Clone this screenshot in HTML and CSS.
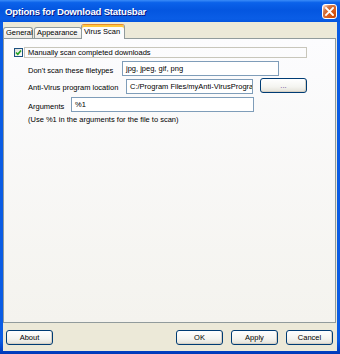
FILE: index.html
```html
<!DOCTYPE html>
<html>
<head>
<meta charset="utf-8">
<link rel="stylesheet" href="styles.css">
</head>
<body>
<div class="window">
  <div class="titlebar">
    <span class="title">Options for Download Statusbar</span>
    <span class="close"><svg width="9" height="9" viewBox="0 0 9 9"><path d="M1 1L8 8M8 1L1 8" stroke="#fff" stroke-width="1.8" stroke-linecap="square"/></svg></span>
  </div>
  <div class="client">
    <div class="tabs">
      <div class="tab t-general">General</div>
      <div class="tab t-appearance">Appearance</div>
      <div class="tab active">Virus Scan</div>
    </div>
    <div class="panel">
      <div class="check-row">
        <span class="checkbox"><svg width="7" height="7" viewBox="0 0 7 7"><path d="M1 3.5L2.8 5.3L6 1.5" fill="none" stroke="#21A121" stroke-width="1.6"/></svg></span>
        <span class="check-label">Manually scan completed downloads</span>
      </div>
      <div class="row r2">
        <span class="label l2">Don't scan these filetypes</span>
        <span class="input i2">jpg, jpeg, gif, png</span>
      </div>
      <div class="row r3">
        <span class="label l3">Anti-Virus program location</span>
        <span class="input i3">C:/Program Files/myAnti-VirusProgram</span>
        <span class="btn browse">...</span>
      </div>
      <div class="row r4">
        <span class="label l4">Arguments</span>
        <span class="input i4">%1</span>
      </div>
      <div class="note">(Use %1 in the arguments for the file to scan)</div>
    </div>
    <div class="footer">
      <span class="btn">About</span>
      <span class="btn ok">OK</span>
      <span class="btn">Apply</span>
      <span class="btn">Cancel</span>
    </div>
  </div>
</div>
</body>
</html>
```

FILE: styles.css
```css
html, body {
  margin: 0;
  padding: 0;
}
body {
  width: 340px;
  height: 354px;
  overflow: hidden;
  font-family: "Liberation Sans", Arial, sans-serif;
  font-size: 7.5px;
  color: #000;
}
.window {
  width: 340px;
  height: 354px;
  display: flex;
  flex-direction: column;
  background: linear-gradient(to bottom, #0A5CE4 0%, #0A5CE4 96%, #0038B8 100%);
}
.titlebar {
  height: 22px;
  flex: none;
  display: flex;
  align-items: center;
  justify-content: space-between;
  padding: 0 3px 0 5px;
  background: linear-gradient(to bottom, #3A8CF8 0%, #0B62EA 12%, #0456E0 45%, #0A5DE6 85%, #0454DE 100%);
}
.title {
  font-family: "Liberation Sans", Arial, sans-serif;
  font-weight: bold;
  font-size: 9.6px;
  color: #fff;
  letter-spacing: -0.2px;
  text-shadow: 1px 1px #0A1883;
}
.close {
  width: 13px;
  height: 13px;
  border: 1px solid #fff;
  border-radius: 3px;
  display: flex;
  align-items: center;
  justify-content: center;
  background: radial-gradient(circle at 90% 90%, #CC4600 0%, #DC6527 55%, #CD7546 70%, #FFCCB2 90%, #fff 100%);
}
.client {
  flex: 1;
  margin: 0 3px 3px;
  background: #ECE9D8;
  display: flex;
  flex-direction: column;
}
.tabs {
  height: 16px;
  flex: none;
  display: flex;
  align-items: flex-end;
}
.tab {
  height: 10px;
  line-height: 10px;
  padding: 0 2px;
  border: 1px solid #919B9C;
  border-bottom: none;
  border-radius: 3px 3px 0 0;
  background: linear-gradient(to bottom, #FFFFFF, #ECEBE6);
  white-space: nowrap;
}
.t-general {
  width: 24px;
}
.t-appearance {
  width: 42px;
  margin-left: 1px;
}
.tab.active {
  position: relative;
  z-index: 1;
  height: 14px;
  line-height: 13px;
  width: 38px;
  margin-left: -1px;
  margin-bottom: -1px;
  background: #FCFCFE;
  border-top: 1px solid #E68B2C;
  box-shadow: inset 0 2px #FFC83C;
}
.panel {
  flex: 1;
  border: 1px solid #919B9C;
  margin-right: 1px;
  background: linear-gradient(to bottom, #FCFCFE, #F4F3EE);
  padding: 8px 0 0 10px;
}
.check-row {
  display: flex;
  align-items: center;
  height: 11px;
}
.checkbox {
  width: 7px;
  height: 7px;
  border: 1px solid #1C5180;
  background: linear-gradient(135deg, #DCDCD7, #FFFFFF);
  display: flex;
  align-items: center;
  justify-content: center;
  margin-right: 1px;
}
.check-label {
  width: 278px;
  height: 9px;
  line-height: 9px;
  border: 1px solid #C8C6BB;
  padding-left: 3px;
}
.row {
  display: flex;
  align-items: center;
  padding-left: 14px;
}
.r2 { margin-top: 3px; height: 15px; }
.r3 { margin-top: 2px; height: 16px; }
.r4 { margin-top: 3px; height: 15px; }
.label {
  flex: none;
  white-space: nowrap;
  padding-top: 3px;
}
.l2 { width: 94px; }
.l3 { width: 98px; }
.l4 { width: 43px; }
.input {
  flex: none;
  height: 13px;
  line-height: 13px;
  border: 1px solid #7F9DB9;
  background: #fff;
  padding-left: 3px;
  white-space: nowrap;
  overflow: hidden;
}
.i2 { width: 152px; }
.i3 { width: 122px; }
.i4 { width: 178px; }
.btn {
  flex: none;
  width: 45px;
  height: 13px;
  line-height: 13px;
  text-align: center;
  border: 1px solid #003C74;
  border-radius: 3px;
  background: linear-gradient(to bottom, #FFFFFF 0%, #F4F4F0 60%, #E3E1D7 100%);
  box-shadow: inset -1px -1px #D6D0C5;
}
.browse {
  margin-left: 7px;
  margin-top: -1px;
  color: #5A2D8A;
}
.note {
  padding-left: 14px;
  margin-top: 3px;
  height: 10px;
  line-height: 10px;
}
.footer {
  flex: none;
  height: 15px;
  padding: 7px 4px 6px 3px;
  display: flex;
  gap: 8px;
}
.ok {
  margin-left: auto;
}
```
